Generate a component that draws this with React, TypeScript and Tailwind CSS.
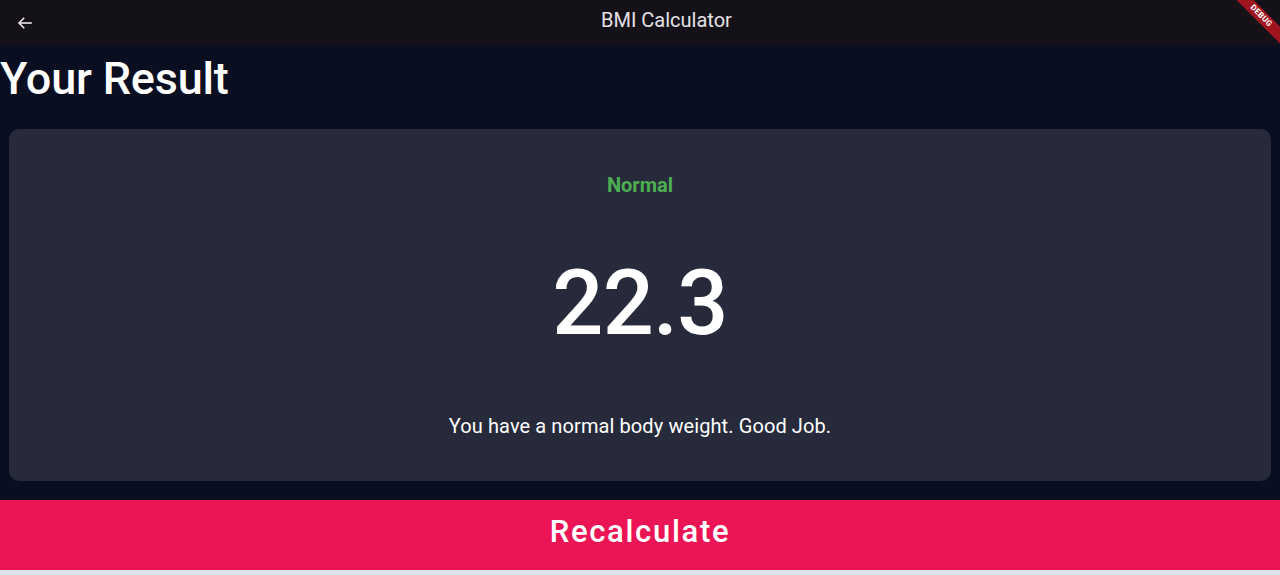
import React from "react";

export default function App() {
  return (
    <div
      className="relative w-[1280px] h-[575px] overflow-hidden bg-[#0a0e21] flex flex-col"
      style={{ fontFamily: "Roboto, 'Noto Sans', sans-serif" }}
    >
      <header className="h-[45px] shrink-0 bg-[#141218] flex items-center relative">
        <svg className="ml-[16px]" width="18" height="18" viewBox="0 0 24 24" fill="none" stroke="#e6e1e5" strokeWidth="2.2" strokeLinecap="square">
          <path d="M20 12H5" />
          <path d="M11 5l-7 7 7 7" strokeLinecap="butt" />
        </svg>
        <span className="absolute left-[601px] top-[8px] text-[20px] leading-[24px] text-[#e6e1e5]">BMI Calculator</span>
      </header>
      <h1 className="text-[45px] leading-[52px] font-medium text-white mt-[8px] tracking-[-0.2px]">Your Result</h1>
      <div className="mx-[9px] mt-[24px] h-[352px] rounded-[10px] bg-[#272a3b] flex flex-col items-center">
        <div className="mt-[44px] text-[20px] leading-[24px] font-bold text-[#4caf50]">Normal</div>
        <div className="mt-[57px] text-[90px] leading-[100px] font-medium text-white tracking-[-0.8px]">22.3</div>
        <div className="mt-[60px] text-[20px] leading-[24px] text-white tracking-[0.1px]">You have a normal body weight. Good Job.</div>
      </div>
      <div className="mt-[19px] h-[70px] shrink-0 bg-[#eb1555] flex items-center justify-center">
        <span className="text-[31px] leading-[36px] font-medium text-white tracking-[1.7px] -mt-[6px]">Recalculate</span>
      </div>
      <div className="flex-1 bg-[#dfe3e8]" />
      <div className="absolute top-0 right-0 w-[60px] h-[60px] overflow-hidden pointer-events-none">
        <div className="absolute top-[10px] right-[-26px] w-[90px] h-[12px] bg-[#a0141e] rotate-45 flex items-center justify-center">
          <span className="text-[8px] font-bold text-white leading-none tracking-[0.3px]">DEBUG</span>
        </div>
      </div>
    </div>
  );
}
